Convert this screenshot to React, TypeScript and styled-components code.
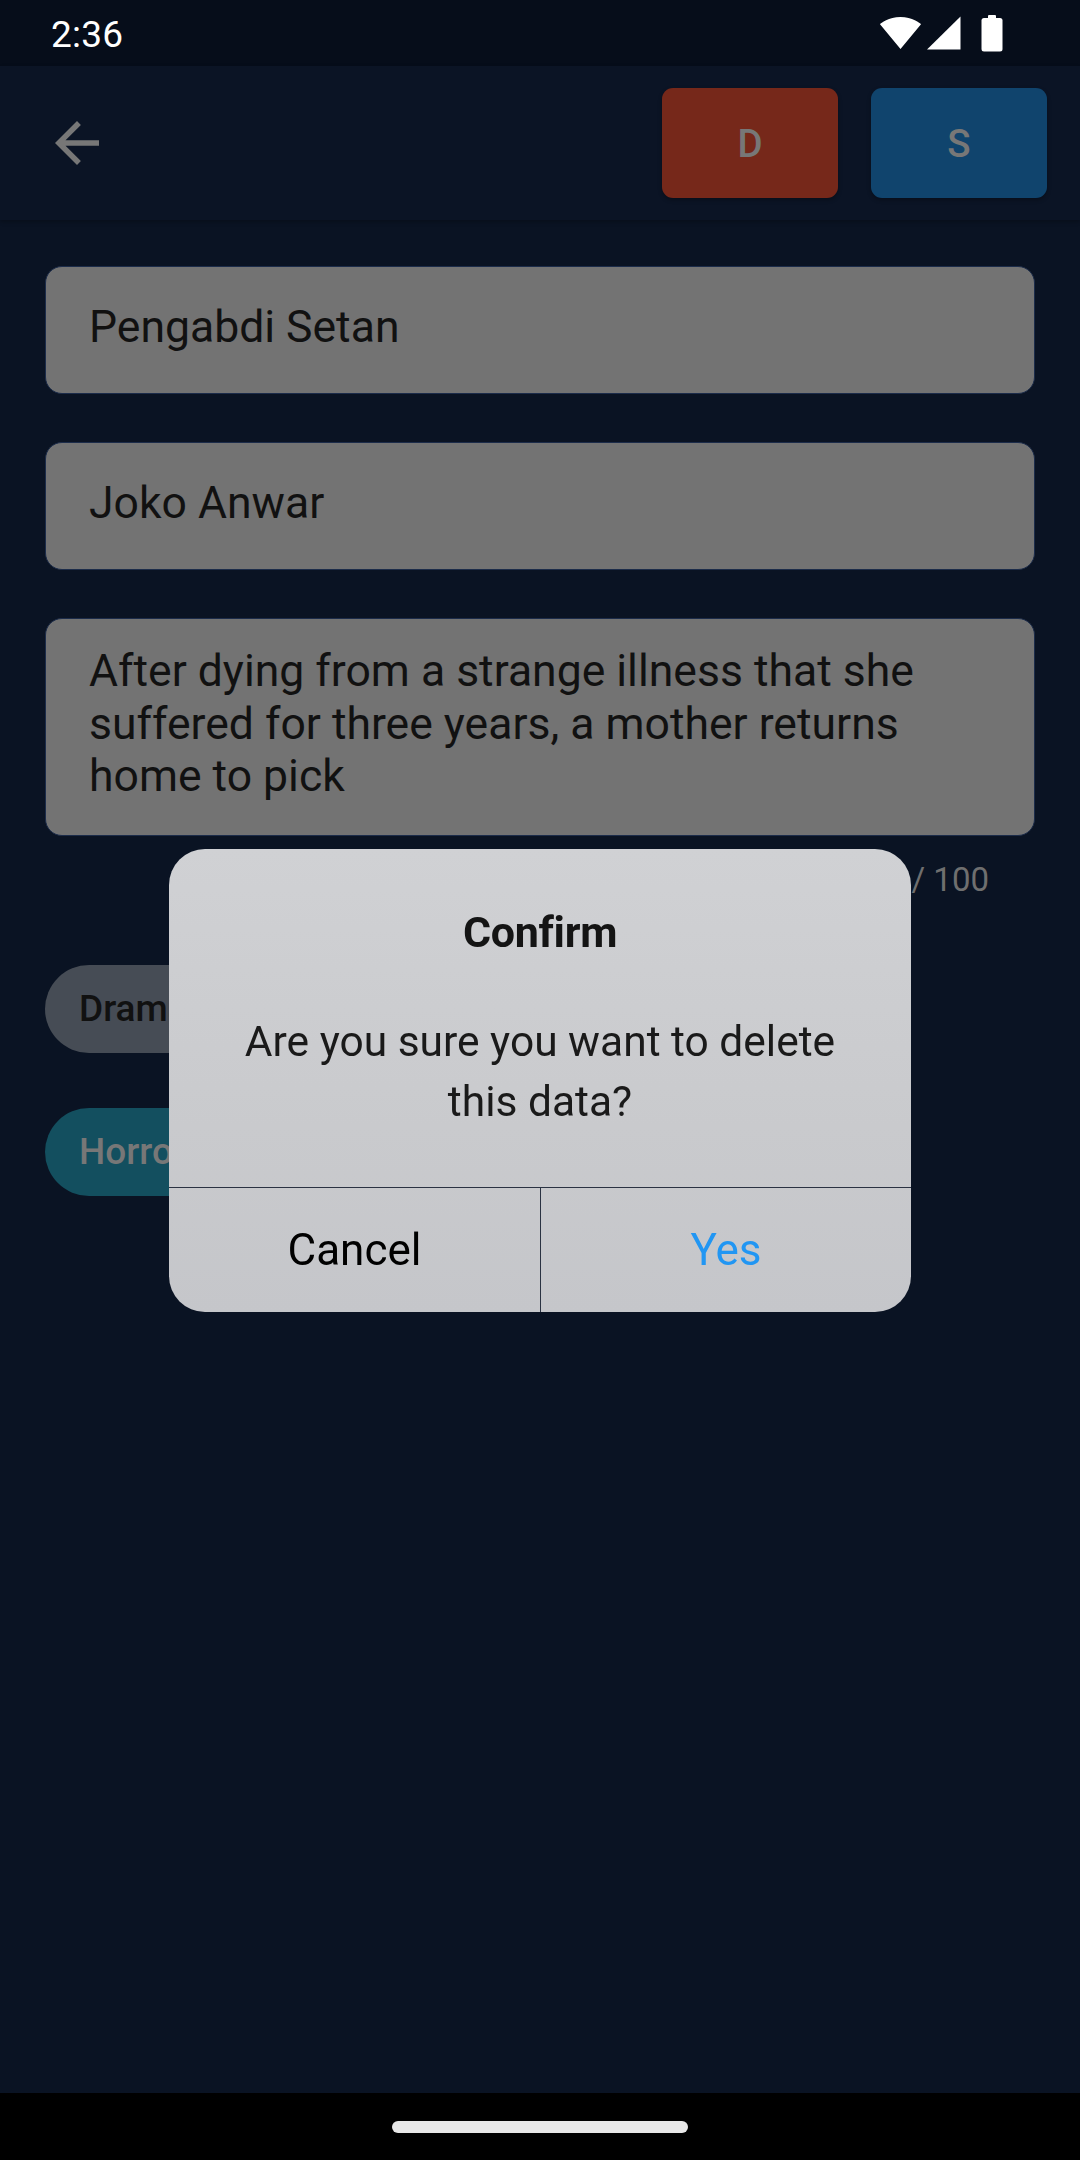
import React from "react";
import styled, { createGlobalStyle } from "styled-components";

const GlobalStyle = createGlobalStyle`
  html, body {
    margin: 0;
    padding: 0;
    background: #0a1323;
  }
  * { box-sizing: border-box; }
  body {
    font-family: Roboto, "Noto Sans", "Liberation Sans", sans-serif;
  }
`;

const Screen = styled.div`
  width: 1080px;
  height: 2160px;
  display: flex;
  flex-direction: column;
  background: #0a1323;
  overflow: hidden;
`;

const StatusBar = styled.div`
  height: 66px;
  flex: none;
  background: #060d1a;
  display: flex;
  align-items: center;
  justify-content: space-between;
  padding: 4px 77px 0 51px;
`;

const Clock = styled.span`
  color: #ffffff;
  font-size: 37px;
  line-height: 44px;
  letter-spacing: 0.2px;
`;

const StatusIcons = styled.div`
  display: flex;
  align-items: center;
  gap: 5px;
  margin-top: -4px;
`;

const AppBar = styled.header`
  height: 154px;
  flex: none;
  background: #0b1425;
  display: flex;
  align-items: center;
  padding: 0 33px 0 44px;
  box-shadow: 0 2px 4px rgba(0, 0, 0, 0.25);
  position: relative;
  z-index: 1;
`;

const BackButton = styled.div`
  width: 66px;
  height: 66px;
  display: flex;
  align-items: center;
  justify-content: center;
`;

const Spacer = styled.div`
  flex: 1;
`;

const ActionButton = styled.div<{ $bg: string }>`
  width: 176px;
  height: 110px;
  border-radius: 11px;
  background: ${(p) => p.$bg};
  color: #777777;
  font-size: 38.5px;
  font-weight: 500;
  display: flex;
  align-items: center;
  justify-content: center;
  box-shadow: 0 2px 4px rgba(0, 0, 0, 0.3);
  & + & {
    margin-left: 33px;
  }
`;

const Body = styled.main`
  flex: 1;
  padding: 46px 45px 0 45px;
  display: flex;
  flex-direction: column;
`;

const Field = styled.div<{ $multi?: boolean }>`
  background: #737373;
  border: 1px solid #1c2c4a;
  border-radius: 17px;
  color: #111111;
  font-size: 44.5px;
  line-height: ${(p) => (p.$multi ? "52.5px" : "52px")};
  padding: ${(p) => (p.$multi ? "26px 42px 32.5px 43px" : "34px 42px 40px 43px")};
  & + & {
    margin-top: 48px;
  }
`;

const Counter = styled.div`
  align-self: flex-end;
  margin: 24px 46px 0 0;
  color: #6f6f6f;
  font-size: 33px;
  line-height: 40px;
`;

const Chips = styled.div`
  margin-top: 65px;
  display: flex;
  flex-direction: column;
  align-items: flex-start;
  gap: 55px;
`;

const Chip = styled.div<{ $bg: string; $fg: string }>`
  height: 88px;
  border-radius: 44px;
  padding: 0 34px;
  display: flex;
  align-items: center;
  background: ${(p) => p.$bg};
  color: ${(p) => p.$fg};
  font-size: 37px;
  font-weight: 500;
  line-height: 44px;
`;

const NavBar = styled.div`
  height: 67px;
  flex: none;
  background: #000000;
  display: flex;
  justify-content: center;
  padding-top: 28px;
`;

const Handle = styled.div`
  width: 296px;
  height: 12px;
  border-radius: 6px;
  background: #e8e8e8;
`;

const Overlay = styled.div`
  position: fixed;
  inset: 0;
  display: flex;
  align-items: center;
  justify-content: center;
  z-index: 10;
`;

const Dialog = styled.div`
  width: 742px;
  border-radius: 36px;
  overflow: hidden;
  background: linear-gradient(180deg, #d0d1d4 0%, #c9cacd 60%, #c5c6ca 100%);
  display: flex;
  flex-direction: column;
`;

const DialogBody = styled.div`
  padding: 57px 48px 55px;
  display: flex;
  flex-direction: column;
  align-items: center;
  text-align: center;
`;

const Title = styled.div`
  color: #141414;
  font-size: 43px;
  font-weight: 700;
  line-height: 52px;
  letter-spacing: -0.3px;
`;

const Message = styled.div`
  margin-top: 54px;
  color: #1a1a1a;
  font-size: 42.5px;
  line-height: 60px;
`;

const Actions = styled.div`
  display: grid;
  grid-template-columns: 1fr 1fr;
  border-top: 1.5px solid #2a3242;
  height: 125px;
`;

const ActionText = styled.div<{ $color: string }>`
  display: flex;
  align-items: center;
  justify-content: center;
  font-size: 44px;
  line-height: 52px;
  color: ${(p) => p.$color};
  & + & {
    border-left: 1.5px solid #2a3242;
  }
`;

const WifiIcon = () => (
  <svg width="41" height="34" viewBox="0.4 3 23.2 18">
    <path d="M12 21L23.6 7C23.15 6.66 18.67 3 12 3S.85 6.66.4 7L12 21z" fill="#ffffff" />
  </svg>
);

const SignalIcon = () => (
  <svg width="35" height="34" viewBox="0 0 35 34">
    <path d="M1 33.5 L34.5 33.5 L34.5 0.5 Z" fill="#ffffff" />
  </svg>
);

const BatteryIcon = () => (
  <svg width="22" height="37" viewBox="0 0 22 37" style={{ marginLeft: 15 }}>
    <rect x="7" y="0" width="8" height="5" rx="1" fill="#ffffff" />
    <rect x="0.5" y="3" width="21" height="33.5" rx="2.5" fill="#ffffff" />
  </svg>
);

const BackArrow = () => (
  <svg width="66" height="66" viewBox="0 0 24 24">
    <path
      d="M20 11H7.83l5.59-5.59L12 4l-8 8 8 8 1.41-1.41L7.83 13H20v-2z"
      fill="#777777"
    />
  </svg>
);

export default function App() {
  return (
    <>
      <GlobalStyle />
      <Screen>
        <StatusBar>
          <Clock>2:36</Clock>
          <StatusIcons>
            <WifiIcon />
            <SignalIcon />
            <BatteryIcon />
          </StatusIcons>
        </StatusBar>
        <AppBar>
          <BackButton>
            <BackArrow />
          </BackButton>
          <Spacer />
          <ActionButton $bg="#76281a">D</ActionButton>
          <ActionButton $bg="#10446d">S</ActionButton>
        </AppBar>
        <Body>
          <Field>Pengabdi Setan</Field>
          <Field>Joko Anwar</Field>
          <Field $multi>
            After dying from a strange illness that she suffered for three years, a mother returns
            home to pick
          </Field>
          <Counter>99 / 100</Counter>
          <Chips>
            <Chip $bg="#464c55" $fg="#111111">Drama</Chip>
            <Chip $bg="#134f5f" $fg="#777777">Horror</Chip>
          </Chips>
        </Body>
        <NavBar>
          <Handle />
        </NavBar>
      </Screen>
      <Overlay>
        <Dialog>
          <DialogBody>
            <Title>Confirm</Title>
            <Message>Are you sure you want to delete this data?</Message>
          </DialogBody>
          <Actions>
            <ActionText $color="#000000">Cancel</ActionText>
            <ActionText $color="#2196f3">Yes</ActionText>
          </Actions>
        </Dialog>
      </Overlay>
    </>
  );
}
